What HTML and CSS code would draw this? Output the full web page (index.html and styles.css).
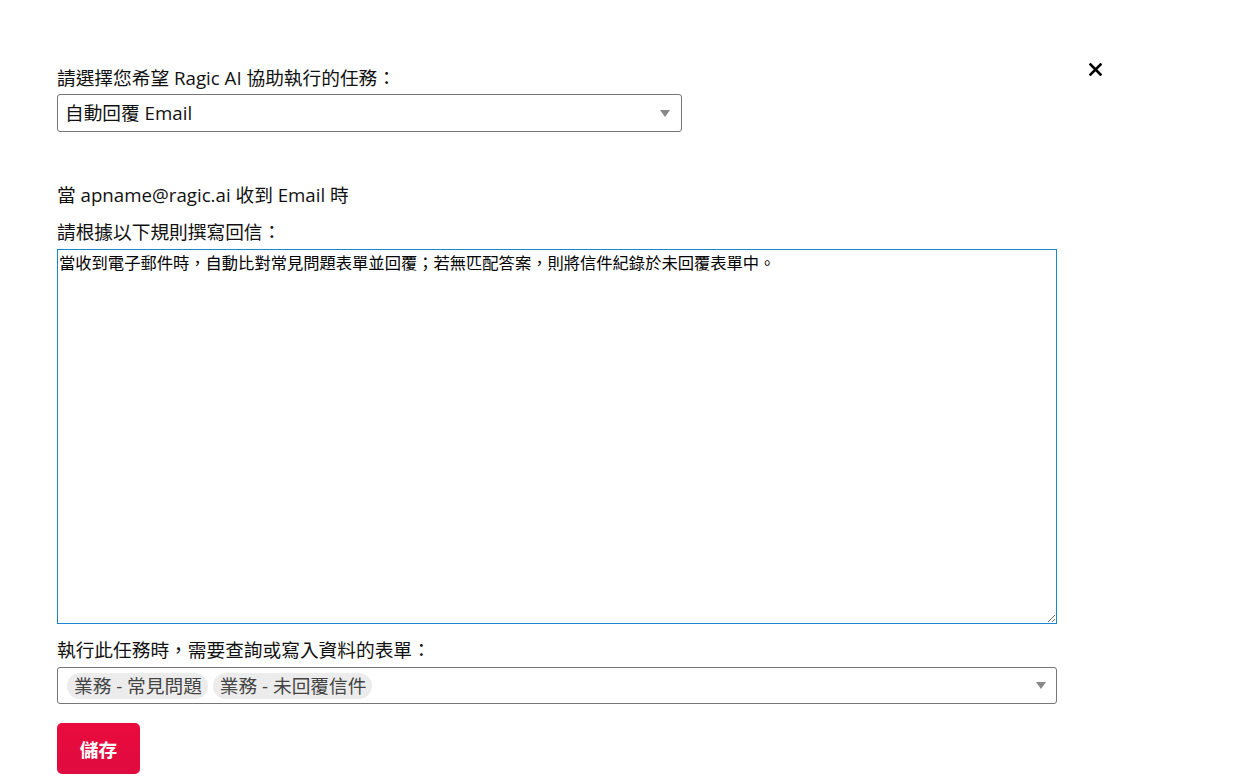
FILE: index.html
```html
<!DOCTYPE html>
<html lang="zh-Hant">
<head>
    <meta charset="UTF-8">
    <meta name="viewport" content="width=device-width, initial-scale=1.0">
    <title>Ragic AI</title>
    <link rel="stylesheet" href="styles.css">
</head>
<body>
    <div class="dialog">
        <button class="close-btn" title="關閉">
            <svg width="13" height="13" viewBox="0 0 13 13">
                <path d="M1.5 1.5 L11.5 11.5 M11.5 1.5 L1.5 11.5" stroke="#000" stroke-width="2.6" stroke-linecap="square"/>
            </svg>
        </button>

        <div class="field-label">請選擇您希望 Ragic AI 協助執行的任務：</div>
        <div class="select-box task-select">
            <span class="select-value">自動回覆 Email</span>
            <span class="select-arrow"></span>
        </div>

        <div class="trigger-text">當 apname@ragic.ai 收到 Email 時</div>

        <div class="field-label">請根據以下規則撰寫回信：</div>
        <textarea class="rule-input">當收到電子郵件時，自動比對常見問題表單並回覆；若無匹配答案，則將信件紀錄於未回覆表單中。</textarea>

        <div class="field-label">執行此任務時，需要查詢或寫入資料的表單：</div>
        <div class="select-box multi-select">
            <div class="tags">
                <span class="tag">業務 - 常見問題</span>
                <span class="tag">業務 - 未回覆信件</span>
            </div>
            <span class="select-arrow"></span>
        </div>

        <button class="save-btn">儲存</button>
    </div>
</body>
</html>
```

FILE: styles.css
```css
* {
    margin: 0;
    padding: 0;
    box-sizing: border-box;
}

body {
    font-family: 'Open Sans', 'Noto Sans CJK TC', sans-serif;
    background: #fff;
    color: #111;
}

.dialog {
    position: relative;
    width: 1057px;
    padding: 65px 0 0 57px;
}

.close-btn {
    position: absolute;
    top: 63px;
    left: 1089px;
    border: none;
    background: none;
    cursor: pointer;
    line-height: 0;
}

.field-label {
    font-size: 18.7px;
    line-height: 26px;
    margin-bottom: 3px;
}

.select-box {
    display: flex;
    align-items: center;
    justify-content: space-between;
    border: 1px solid #767676;
    border-radius: 3px;
    background: #fff;
}

.task-select {
    width: 625px;
    height: 38px;
    padding: 0 11px 3px 7px;
    font-size: 18.7px;
}

.select-arrow {
    width: 0;
    height: 0;
    border-left: 5px solid transparent;
    border-right: 5px solid transparent;
    border-top: 7px solid #888;
}

.task-select .select-arrow {
    margin-top: 3px;
}

.trigger-text {
    font-size: 18.7px;
    line-height: 26px;
    margin: 50px 0 11px;
}

.rule-input {
    display: block;
    width: 1000px;
    height: 375px;
    margin-top: 4px;
    padding: 1px 1px;
    border: 1px solid #1787d1;
    font-family: 'Noto Sans CJK TC', sans-serif;
    font-size: 16.3px;
    line-height: 22px;
    color: #000;
    resize: both;
    outline: none;
}

.rule-input + .field-label {
    margin-top: 13px;
    margin-bottom: 4px;
}

.multi-select {
    width: 1000px;
    height: 37px;
    padding: 0 10px 0 9px;
}

.tags {
    display: flex;
    gap: 5px;
}

.tag {
    background: #ececec;
    color: #444;
    font-size: 18.7px;
    line-height: 26px;
    padding: 0 6px 0 7px;
    border-radius: 13px;
}

.save-btn {
    display: block;
    margin-top: 19px;
    width: 83px;
    height: 51px;
    border: none;
    border-radius: 5px;
    background: linear-gradient(#ea0b3c, #df0b40);
    color: #fff;
    font-family: 'Open Sans', 'Noto Sans CJK TC', sans-serif;
    font-size: 18.7px;
    font-weight: 600;
    cursor: pointer;
}
```
